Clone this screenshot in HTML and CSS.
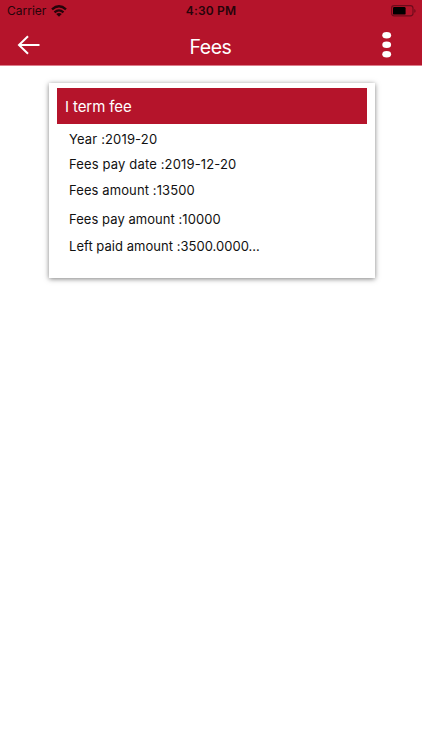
FILE: index.html
```html
<!DOCTYPE html>
<html lang="en">
<head>
<meta charset="utf-8">
<title>Fees</title>
<link rel="stylesheet" href="styles.css">
</head>
<body>
<header class="header">
  <div class="status">
    <div class="status-left"><span class="carrier">Carrier</span>
      <svg class="wifi" width="16" height="12" viewBox="0 0 16 12"><g fill="none" stroke="#26040a" stroke-width="2.3"><path d="M1 4.4Q8-1.8 15 4.4"/><path d="M3.5 7.3Q8 3.4 12.5 7.3"/></g><path d="M5.2 9Q8 6.9 10.8 9L8 11.8Z" fill="#26040a"/></svg>
    </div>
    <span class="time">4:30 PM</span>
    <svg class="battery" width="25" height="12" viewBox="0 0 25 12"><rect x=".6" y=".6" width="21.4" height="10.3" rx="2.6" fill="none" stroke="#6d0b1b" stroke-width="1.1"/><rect x="2" y="2" width="12.6" height="7.6" rx="1.2" fill="#000"/><path d="M23.3 4v3.8q1.3-.6 1.3-1.9T23.3 4Z" fill="#6d0b1b"/></svg>
  </div>
  <nav class="nav">
    <svg class="back" width="24" height="20" viewBox="0 0 24 20"><path d="M22.5 10H2M11 1.2 2 10l9 8.8" fill="none" stroke="#fff" stroke-width="2"/></svg>
    <h1 class="title">Fees</h1>
    <svg class="more" width="10" height="28" viewBox="0 0 10 28" fill="#fff"><ellipse cx="4.7" cy="4.2" rx="4.4" ry="3.3"/><ellipse cx="4.7" cy="13.7" rx="4.4" ry="3.3"/><ellipse cx="4.7" cy="23.2" rx="4.4" ry="3.3"/></svg>
  </nav>
</header>
<main class="content">
  <section class="card">
    <h2 class="card-title"><span>I term fee</span></h2>
    <div class="details">
      <p class="row year">Year :2019-20</p>
      <p class="row date">Fees pay date :2019-12-20</p>
      <p class="row amount">Fees amount :13500</p>
      <p class="row paid">Fees pay amount :10000</p>
      <p class="row left">Left paid amount :3500.0000...</p>
    </div>
  </section>
</main>
</body>
</html>
```
FILE: styles.css
```css
* { box-sizing: border-box; }
body { margin: 0; min-height: 100vh; background: #fff; color: #111; font-family: Inter, "Liberation Sans", sans-serif; }
h1, h2, p { margin: 0; font-weight: 400; }
svg { display: block; flex: none; }
.header { height: 66px; background: #b5142b; border-bottom: 1px solid #dc7d8b; }
.status { display: grid; grid-template-columns: 1fr auto 1fr; height: 22px; padding: 0 6px 0 7px; align-items: center; color: #26040a; }
.status-left { display: flex; align-items: center; gap: 5px; }
.carrier, .time { font-size: 12px; line-height: 14px; margin-top: -1px; }
.wifi { margin-top: -1px; }
.time { font-weight: 600; letter-spacing: .15px; margin-left: -1px; }
.battery { justify-self: end; }
.nav { display: grid; grid-template-columns: 50px 1fr 50px; height: 43px; padding: 0 30px 0 17px; align-items: center; }
.back { margin-top: 2px; }
.title { color: #fff; font-size: 19.5px; line-height: 24px; letter-spacing: -.5px; margin-top: 7px; padding-left: 12px; text-align: center; }
.more { justify-self: end; margin-top: 2px; }
.content { display: flow-root; min-height: 684px; padding: 17px 0 0 49px; }
.card { width: 326px; height: 195px; padding: 5px 8px; background: #fff; box-shadow: 0 1px 5px rgba(0,0,0,.5); }
.card-title { display: flex; align-items: center; height: 36px; padding-left: 8px; background: #b5142b; color: #fff; font-size: 15px; letter-spacing: -.1px; }
.details { padding: 5px 0 0 12px; font-size: 13px; letter-spacing: .08px; }
.row { height: 20px; line-height: 20px; white-space: nowrap; }
.year, .date { letter-spacing: .15px; }
.date { margin-top: 5px; }
.amount { margin-top: 6px; letter-spacing: .1px; }
.paid { margin-top: 9px; letter-spacing: .05px; }
.left { margin-top: 7px; letter-spacing: .03px; }
```
